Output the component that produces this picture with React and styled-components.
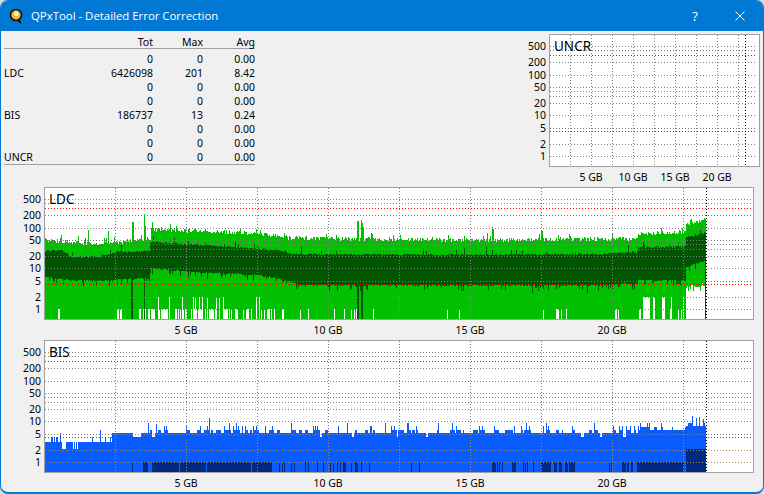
import React from 'react';
import styled, { createGlobalStyle } from 'styled-components';

const GlobalStyle = createGlobalStyle`
  html, body {
    margin: 0;
    padding: 0;
    background: #dcdcdc;
  }
`;

const Window = styled.div`
  box-sizing: border-box;
  width: 764px;
  height: 494px;
  display: flex;
  flex-direction: column;
  border: 1px solid #0078d4;
  border-bottom-width: 2px;
  border-radius: 8px;
  overflow: hidden;
  background: #f0f0f0;
  color: #000;
  font-family: "Noto Sans", "Liberation Sans", sans-serif;
  font-size: 10.5px;
`;

const TitleBar = styled.div`
  height: 31px;
  margin-top: -1px;
  flex: none;
  display: flex;
  align-items: center;
  padding-left: 8px;
  background: #0078d4;
  color: #fff;
`;

const TitleText = styled.span`
  margin-left: 5px;
  font-family: "Open Sans", sans-serif;
  font-size: 11.4px;
  flex: 1;
`;

const HelpButton = styled.span`
  width: 12px;
  margin-right: 34px;
  font-family: "Open Sans", sans-serif;
  font-size: 13px;
  text-align: center;
`;

const CloseButton = styled.span`
  display: flex;
  margin-right: 18px;
`;

const Body = styled.div`
  flex: 1;
  display: flex;
  flex-direction: column;
  padding-top: 3px;
`;

const TopRow = styled.div`
  display: flex;
  justify-content: space-between;
  padding: 0 3px;
`;

const Stats = styled.div`
  width: 251px;
  padding-top: 1px;
`;

const StatRow = styled.div`
  display: grid;
  grid-template-columns: 1fr 50px 50px 52px;
  height: 14px;
  line-height: 14px;
  text-align: right;
`;

const HeadRow = styled(StatRow)`
  height: 13px;
  margin-bottom: 3px;
  border-bottom: 1px solid #a0a0a0;
`;

const RowsEnd = styled.div`
  border-top: 1px solid #a0a0a0;
`;

const StatName = styled.span`
  text-align: left;
`;

const Panel = styled.div`
  height: 153px;
  flex: none;
  display: grid;
  grid-template-columns: ${p => p.$axis}px ${p => p.$width}px;
  grid-template-rows: 133px 20px;
`;

const YAxis = styled.div`
  position: relative;
`;

const YTick = styled.span`
  position: absolute;
  right: 3px;
  height: 11px;
  line-height: 11px;
`;

const Plot = styled.div`
  position: relative;
  box-sizing: border-box;
  border: 1px solid #a0a0a0;
  background: #fff;
  svg {
    display: block;
  }
`;

const PlotName = styled.span`
  position: absolute;
  left: 4px;
  top: 2px;
  font-size: 13.5px;
  line-height: 18px;
`;

const XAxis = styled.div`
  grid-column: 2;
  display: grid;
  grid-template-columns: repeat(4, ${p => p.$step * 2}px);
  padding-left: ${p => p.$step}px;
  line-height: 14px;
  padding-top: 3px;
  text-align: center;
`;

const random = (seed) => () => {
  seed = (seed + 0x6d2b79f5) | 0;
  let t = Math.imul(seed ^ (seed >>> 15), 1 | seed);
  t = (t + Math.imul(t ^ (t >>> 7), 61 | t)) ^ t;
  return ((t ^ (t >>> 14)) >>> 0) / 4294967296;
};

const lerp = (pts, x) => {
  for (let i = 1; i < pts.length; i++) {
    if (x <= pts[i][0]) {
      const [x0, y0] = pts[i - 1];
      const [x1, y1] = pts[i];
      return y0 + ((y1 - y0) * (x - x0)) / (x1 - x0);
    }
  }
  return pts[pts.length - 1][1];
};

const bar = (x, top, bottom) => `M${x + 0.5} ${top}V${bottom}`;

// all coordinates below are window pixels, the plots shift them by their own origin
const ldcTop = [[45, 239], [80, 242], [100, 243], [130, 240], [150, 239], [151, 229], [200, 230], [260, 233], [290, 237], [440, 239], [637, 238], [638, 233], [685, 231], [686, 223], [706, 219]];
const ldcDarkTop = [[45, 251], [62, 250], [70, 257], [100, 257], [115, 252], [149, 251], [150, 242], [200, 245], [260, 249], [285, 251], [290, 254], [440, 255], [600, 254], [637, 252], [638, 247], [685, 247], [686, 237], [706, 233]];
const ldcDarkBottom = [[45, 277], [70, 280], [110, 280], [130, 278], [149, 278], [150, 268], [200, 272], [260, 275], [290, 281], [300, 285], [600, 285], [637, 283], [638, 280], [685, 280], [686, 267], [706, 260]];
const ldcTopSpikes = { 88: 230, 108: 231, 132: 222, 133: 222, 144: 214, 145: 226, 152: 222, 176: 226, 256: 229, 357: 221, 358: 221, 361: 220, 362: 223, 363: 227, 492: 227, 493: 229, 541: 231, 542: 231, 690: 220 };
const ldcFullDark = [131, 132, 144, 357, 358, 361, 362];
const ldcLow = [58, 59, 117, 118, 120, 121, 251, 256, 259, 261, 264, 267, 268, 269, 271, 274, 282, 283, 300, 308, 334, 344, 351, 354, 356, 373, 447, 459, 543, 556, 557, 558, 561, 566, 615, 616, 618, 639, 640, 646, 654, 662, 670, 678, 681];
const ldcTall = [256, 259, 643, 644, 645, 646, 647, 648, 649, 653, 654, 662, 663, 664, 671, 683];

const ldcLayers = (ox, oy) => {
  const r = random(7);
  let bright = '';
  let dark = '';
  for (let x = 45; x < 706; x++) {
    const n = r();
    let top = lerp(ldcTop, x) + r() * 4 - 1;
    if (n > 0.9) top -= 2 + r() * 4;
    if (ldcTopSpikes[x]) top = ldcTopSpikes[x];

    let low = 319;
    if (x >= 686) {
      low = 283 + r() * 9;
    } else if (ldcTall.includes(x) || (x > 153 && x < 226 && r() < 0.14)) {
      low = 297;
    } else if (ldcLow.includes(x) || (x > 136 && x < 250 && r() < 0.5)) {
      low = 309;
    }
    bright += bar(x - ox, Math.round(top) - oy, low - oy);

    let dTop = lerp(ldcDarkTop, x) + r() * 2 - 1;
    if (r() > 0.95) dTop -= 2 + r() * 5;
    let dBottom = lerp(ldcDarkBottom, x) + r() * 1.5 - 0.5;
    if (r() > 0.85) dBottom += 2 + r() * 4;
    if (x > 440 && x < 640 && r() > 0.97) dBottom += 8;
    if (ldcFullDark.includes(x)) dBottom = 319;
    dark += bar(x - ox, Math.round(dTop) - oy, Math.round(dBottom) - oy);
  }
  dark += bar(705 - ox, 233 - oy, 319 - oy);
  return [
    { d: bright, color: '#00c000' },
    { d: dark, color: '#005500' },
  ];
};

const bisDark = [[132, 132], [143, 147], [152, 178], [180, 205], [207, 250], [252, 267], [268, 271], [279, 279], [282, 282], [284, 284], [291, 291], [294, 294], [305, 305], [308, 308], [317, 317], [323, 323], [330, 330], [333, 333], [337, 337], [340, 340], [343, 345], [351, 351], [355, 357], [361, 361], [369, 369], [411, 411], [419, 419], [492, 495], [497, 497], [499, 499], [502, 502], [512, 515], [523, 523], [525, 525], [527, 527], [533, 533], [541, 550], [554, 556], [559, 561], [565, 567], [569, 574], [609, 609], [611, 611], [622, 625], [627, 628], [631, 632], [637, 683]];
const bisSpikes = { 52: 437, 56: 437, 60: 433, 92: 437, 100: 430, 105: 437, 110: 437, 209: 418, 156: 424, 148: 423, 692: 416, 696: 418, 699: 417, 703: 419 };

const bisLayers = (ox, oy) => {
  const r = random(21);
  let bright = '';
  let dark = '';
  let x = 45;
  while (x < 706) {
    const run = 1 + Math.floor(r() * 3);
    const n = r();
    for (let i = 0; i < run && x < 706; i++, x++) {
      let top;
      if (x < 112) {
        top = 442;
        if ((x >= 62 && x <= 65) || (x >= 73 && x <= 78 && x % 2)) top = 449;
        if (x > 50 && x < 60 && x % 3 === 0) top = 437;
      } else {
        const base = x >= 686 ? 426 : x >= 640 ? 430 : 433;
        top = base;
        if (n > 0.6) top = base - 3;
        if (n > 0.78 && i === 0) top = base - 7;
        if (n > 0.92 && i === 0) top = base - 10;
        if (n < 0.05 && x < 640) top = base + 4;
        if (x < 145 && n > 0.6) top = base;
      }
      if (bisSpikes[x]) top = bisSpikes[x];
      bright += bar(x - ox, top - oy, 472 - oy);
    }
  }
  bisDark.forEach(([a, b]) => {
    for (let c = a; c <= b; c++) dark += bar(c - ox, 462 - oy, 472 - oy);
  });
  for (let c = 686; c < 706; c++) dark += bar(c - ox, 449 - oy, 472 - oy);
  return [
    { d: bright, color: '#0a5cff' },
    { d: dark, color: '#002a80' },
  ];
};

const TICKS = [500, 200, 100, 50, 20, 10, 5, 2, 1];
const GRID = [500, 400, 200, 100, 50, 40, 30, 20, 10, 5, 2, 1];
const RED = [300, 4];
const scale = (v) => Math.round(122 - 40.7 * Math.log10(v)) + 0.5;

const Chart = ({ name, axis, width, step, end, layers = [], tint }) => {
  const verticals = [1, 2, 3, 4, 5, 6, 7, 8, 9].map(i => i * step + 0.5);
  const hLine = (v, color) => (
    <line key={v} x1="1" x2={width - 3} y1={scale(v)} y2={scale(v)} stroke={color} strokeDasharray="1 2" />
  );
  return (
    <Panel $axis={axis} $width={width}>
      <YAxis>
        {TICKS.map(v => (
          <YTick key={v} style={{ top: Math.floor(scale(v)) - 5 }}>{v}</YTick>
        ))}
      </YAxis>
      <Plot>
        <svg width={width - 2} height="131" viewBox={`1 1 ${width - 2} 131`} shapeRendering="crispEdges">
          {layers.map(l => (
            <path key={l.color} d={l.d} stroke={l.color} fill="none" />
          ))}
          {GRID.map(v => hLine(v, tint && v <= 2 ? tint : '#808080'))}
          {verticals.map(x => (
            <line key={x} x1={x} x2={x} y1="1" y2="132" stroke="#808080" strokeDasharray="1 2" />
          ))}
          {tint && verticals.filter(x => x < end).map(x => (
            <line key={x} x1={x} x2={x} y1="94" y2="132" stroke={tint} strokeDasharray="1 2" />
          ))}
          {RED.map(v => hLine(v, '#ff0000'))}
          <line x1={end + 0.5} x2={end + 0.5} y1="1" y2="132" stroke="#000" strokeDasharray="1 2" />
        </svg>
        <PlotName>{name}</PlotName>
      </Plot>
      <XAxis $step={step}>
        <span>5 GB</span>
        <span>10 GB</span>
        <span>15 GB</span>
        <span>20 GB</span>
      </XAxis>
    </Panel>
  );
};

const rows = [
  ['', 0, 0, '0.00'],
  ['LDC', 6426098, 201, '8.42'],
  ['', 0, 0, '0.00'],
  ['', 0, 0, '0.00'],
  ['BIS', 186737, 13, '0.24'],
  ['', 0, 0, '0.00'],
  ['', 0, 0, '0.00'],
  ['UNCR', 0, 0, '0.00'],
];

const AppIcon = () => (
  <svg width="17" height="18" viewBox="0 0 17 18">
    <circle cx="7" cy="8" r="5.5" fill="#e8b93f" stroke="#111" strokeWidth="1.6" />
    <circle cx="7.5" cy="7" r="2.3" fill="#fff3cc" />
    <path d="M9 13l3 3" stroke="#111" strokeWidth="1.8" />
  </svg>
);

export default function App() {
  return (
    <>
      <GlobalStyle />
      <Window>
        <TitleBar>
          <AppIcon />
          <TitleText>QPxTool - Detailed Error Correction</TitleText>
          <HelpButton>?</HelpButton>
          <CloseButton>
            <svg width="10" height="10" viewBox="0 0 10 10">
              <path d="M.5.5l9 9M9.5.5l-9 9" stroke="#fff" fill="none" />
            </svg>
          </CloseButton>
        </TitleBar>
        <Body>
          <TopRow>
            <Stats>
              <HeadRow>
                <span />
                <span>Tot</span>
                <span>Max</span>
                <span>Avg</span>
              </HeadRow>
              {rows.map((row, i) => (
                <StatRow key={i}>
                  <StatName>{row[0]}</StatName>
                  <span>{row[1]}</span>
                  <span>{row[2]}</span>
                  <span>{row[3]}</span>
                </StatRow>
              ))}
              <RowsEnd />
            </Stats>
            <Chart name="UNCR" axis={34} width={211} step={21} end={196} />
          </TopRow>
          <Chart name="LDC" axis={43} width={710} step={71} end={662} layers={ldcLayers(44, 187)} />
          <Chart name="BIS" axis={43} width={710} step={71} end={662} layers={bisLayers(44, 340)} tint="#a58a5c" />
        </Body>
      </Window>
    </>
  );
}
